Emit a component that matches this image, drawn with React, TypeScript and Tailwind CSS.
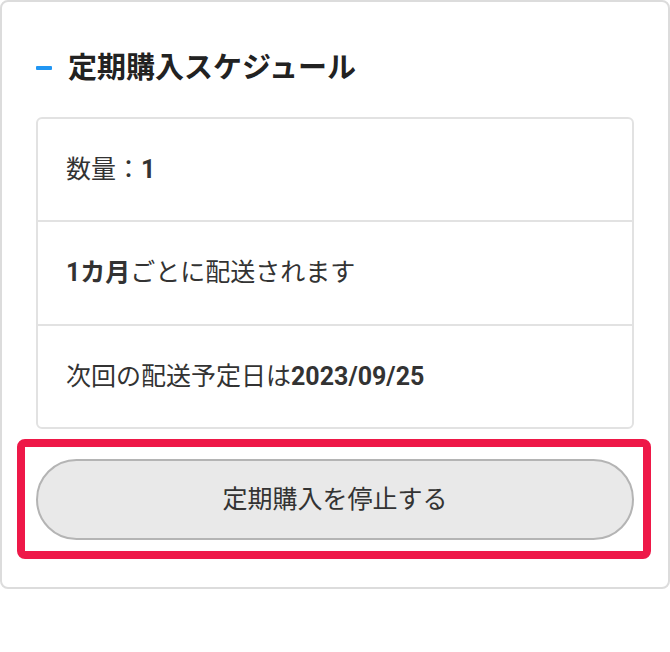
export default function App() {
  return (
    <div className="w-[670px] h-[652px] bg-white font-['Roboto','Noto_Sans_CJK_JP',sans-serif] text-[#333]">
      <div className="border-2 border-[#dcdcdc] rounded-lg pt-[46px] pb-[28px] px-[34px]">
        {/* heading */}
        <div className="flex items-center h-[40px]">
          <span className="w-[16px] h-[4px] bg-[#2196f3] rounded-[1px]" />
          <h2 className="ml-[16px] text-[29px] leading-[40px] font-bold text-[#222]">
            定期購入スケジュール
          </h2>
        </div>

        {/* schedule list */}
        <div className="mt-[29px] border-2 border-[#e2e2e2] rounded-md">
          <div className="h-[101px] flex items-center px-[28px] text-[25px]">
            数量：<span className="font-bold">1</span>
          </div>
          <div className="h-[104px] flex items-center px-[28px] text-[25px] border-t-2 border-[#e2e2e2]">
            <span className="font-bold">1カ月</span>ごとに配送されます
          </div>
          <div className="h-[103px] flex items-center px-[28px] text-[25px] border-t-2 border-[#e2e2e2]">
            次回の配送予定日は<span className="font-bold">2023/09/25</span>
          </div>
        </div>

        {/* highlighted action */}
        <div className="mt-[10px] -ml-[19px] -mr-[17px] border-8 border-[#ee1848] rounded-lg pt-[12px] pb-[11px] pl-[11px] pr-[9px]">
          <button className="w-full h-[81px] rounded-full bg-[#e9e9e9] border-2 border-[#b4b4b4] text-[25px] text-[#333]">
            定期購入を停止する
          </button>
        </div>
      </div>
    </div>
  );
}
